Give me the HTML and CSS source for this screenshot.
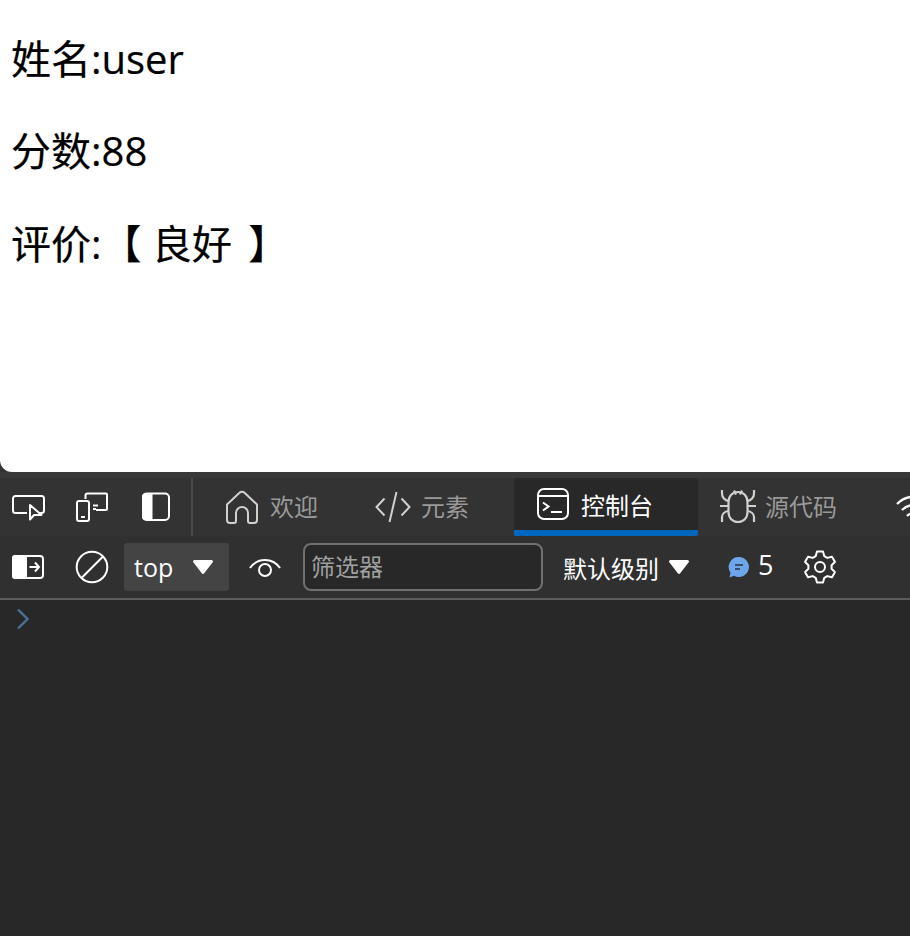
FILE: index.html
```html
<!DOCTYPE html>
<html lang="zh-CN">
<head>
<meta charset="utf-8">
<title>评价</title>
<link rel="stylesheet" href="styles.css">
</head>
<body>
<main class="page">
  <p class="line">姓名:user</p>
  <p class="line">分数:88</p>
  <p class="line line-last">评价:【 良好 <span class="close">】</span></p>
</main>
<section class="devtools">
  <div class="tabbar">
    <div class="tools">
      <svg width="34" height="34" viewBox="-1 0 34 34" fill="none" stroke="#fff" stroke-width="2"><path d="M15 23H3.500a2.500 2.500 0 0 1-2.500-2.500V8.500A2.500 2.500 0 0 1 3.500 6h26A2.500 2.500 0 0 1 32 8.500v12a2.500 2.500 0 0 1-2.500 2.500H27"/><path d="M18 15v14.500l4-4.500h7.500z" stroke-linejoin="round"/></svg>
      <svg width="34" height="34" viewBox="1 0 34 34" fill="none" stroke="#fff" stroke-width="2"><path d="M10.500 9V5.500a2 2 0 0 1 2-2H31a1 1 0 0 1 1 1V19a1 1 0 0 1-1 1H21"/><rect x="2" y="11" width="12" height="20" rx="2"/><path d="M6 27h4M18 15.500h5M18 19h3"/></svg>
      <svg width="34" height="34" viewBox="2 0 34 34" fill="none"><rect x="4" y="3.500" width="26" height="26.500" rx="4" stroke="#fff" stroke-width="2"/><path d="M7 3h6.500v27.500H7a4 4 0 0 1-4-4V7a4 4 0 0 1 4-4z" fill="#fff"/></svg>
    </div>
    <span class="divider"></span>
    <div class="tab tab-home">
      <svg width="34" height="36" viewBox="0 0 34 36" fill="none" stroke="#d0d0d0" stroke-width="2"><path d="M2 15.500 14.500 3.800a3.500 3.500 0 0 1 5 0L32 15.500V31a3 3 0 0 1-3 3h-4a2 2 0 0 1-2-2v-8a6 6 0 0 0-12 0v8a2 2 0 0 1-2 2H5a3 3 0 0 1-3-3z" stroke-linejoin="round"/></svg>
      <span>欢迎</span>
    </div>
    <div class="tab tab-elements">
      <svg width="36" height="32" viewBox="0 0 36 32" fill="none" stroke="#d0d0d0" stroke-width="2"><path d="M9.500 7.500 1.500 16l8 8.500M26.500 7.500l8 8.500-8 8.500M21.500 1l-7 30"/></svg>
      <span>元素</span>
    </div>
    <div class="tab tab-active">
      <svg width="32" height="32" viewBox="0 0 32 32" fill="none" stroke="#fff" stroke-width="2"><rect x="1" y="1" width="30" height="30" rx="6"/><path d="M1 8h30M6 14.500l5.500 4-5.500 4M14 24h11"/></svg>
      <span>控制台</span>
    </div>
    <div class="tab tab-sources">
      <svg width="36" height="36" viewBox="0 0 36 36" fill="none" stroke="#d0d0d0" stroke-width="2.200"><path d="M8.500 13c0-6 4-10 9.500-10s9.500 4 9.500 10v10c0 6-4 10-9.500 10s-9.500-4-9.500-10z"/><path d="M14 1.500l2 4M22 1.500l-2 4M2 1v4c0 3 3 6.500 6.500 7M34 1v4c0 3-3 6.500-6.500 7M0 17h8.500M36 17h-8.500M2 33v-5c0-3 3-5.500 6.500-6M34 33v-5c0-3-3-5.500-6.500-6"/></svg>
      <span>源代码</span>
    </div>
    <svg class="wifi" width="40" height="30" viewBox="0 0 40 30" fill="none" stroke="#fff" stroke-width="2.400"><path d="M1 12c10-10 28-10 38 0M6 18c7-7 21-7 28 0M11 24c4-4 14-4 18 0"/></svg>
  </div>
  <div class="toolbar">
    <svg class="toggle" width="34" height="34" viewBox="0 0 34 34" fill="none"><rect x="2" y="6" width="30" height="22" rx="3" stroke="#fff" stroke-width="2"/><path d="M4 5h12v24H4a3 3 0 0 1-3-3V8a3 3 0 0 1 3-3z" fill="#fff"/><path d="M18.500 17h9M24 12.500l4 4.500-4 4.500" stroke="#fff" stroke-width="2"/></svg>
    <svg class="clear" width="34" height="34" viewBox="0 0 34 34" fill="none" stroke="#fff" stroke-width="2"><circle cx="17" cy="17" r="15.300"/><path d="M6.500 28 28 6.500"/></svg>
    <div class="ctx"><span>top</span><svg width="22" height="16" viewBox="0 0 22 16"><path d="M2.500 1h17a1.500 1.500 0 0 1 1.200 2.300l-8.500 11a1.500 1.500 0 0 1-2.400 0l-8.500-11A1.500 1.500 0 0 1 2.500 1z" fill="#fff"/></svg></div>
    <svg class="eye" width="34" height="24" viewBox="0 0 34 24" fill="none" stroke="#fff" stroke-width="2"><path d="M2 13c3.500-5 9-8 15-8s11.500 3 15 8"/><circle cx="17" cy="15" r="6"/></svg>
    <div class="filter">筛选器</div>
    <div class="level"><span>默认级别</span><svg width="22" height="16" viewBox="0 0 22 16"><path d="M2.500 1h17a1.500 1.500 0 0 1 1.200 2.300l-8.500 11a1.500 1.500 0 0 1-2.400 0l-8.500-11A1.500 1.500 0 0 1 2.500 1z" fill="#fff"/></svg></div>
    <div class="issues">
      <svg width="22" height="22" viewBox="0 0 22 22"><path d="M11 1a10 10 0 1 1-5 18.700L1.500 21.500l1-4.800A10 10 0 0 1 11 1z" fill="#6ea6ea"/><path d="M7 9h8M7 13h5" stroke="#28323d" stroke-width="1.500"/></svg>
      <span>5</span>
    </div>
    <svg class="gear" width="34" height="36" viewBox="0 0 34 36" fill="none" stroke="#fff" stroke-width="2" stroke-linejoin="round"><path d="M14 2.500h6l1.300 4.700 3 1.700 4.700-1.200 3 5.200-3.400 3.400v3.400l3.400 3.400-3 5.200-4.700-1.200-3 1.700-1.300 4.700h-6l-1.300-4.700-3-1.700-4.700 1.200-3-5.200 3.400-3.400v-3.400l-3.400-3.400 3-5.200 4.700 1.200 3-1.700z"/><circle cx="17" cy="18" r="5"/></svg>
  </div>
  <div class="console">
    <svg width="14" height="22" viewBox="0 0 14 22" fill="none" stroke="#4a7199" stroke-width="2.400"><path d="M2 .5 11.500 10 2 19.500"/></svg>
  </div>
</section>
</body>
</html>
```
FILE: styles.css
```css
* { box-sizing: border-box; }
html, body { margin: 0; height: 100%; overflow: hidden; background: #333; }
body {
  width: 910px;
  height: 936px;
  display: flex;
  flex-direction: column;
  font-family: "Open Sans", "Noto Sans CJK SC", sans-serif;
}
.page {
  height: 472px;
  flex: none;
  background: #fff;
  border-bottom-left-radius: 12px;
  padding: 1px 11px 0;
  color: #000;
}
.line { margin: 0; height: 92px; font-size: 40px; line-height: 54px; padding-top: 31px; white-space: pre; -webkit-text-stroke: 0.2px #000; }
.line-last { padding-top: 32px; }
.close { margin-left: 6px; }
.devtools { flex: 1; display: flex; flex-direction: column; background: #333; border-top: 6px solid #393939; min-height: 0; }
.tabbar { height: 58px; display: flex; align-items: center; flex: none; overflow: hidden; }
.tabbar svg, .toolbar svg { flex: none; }
.tools { display: flex; flex: none; width: 191px; padding-left: 11px; gap: 31px; }
.divider { width: 2px; height: 58px; flex: none; background: #4a4a4a; }
.tab { display: flex; flex: none; align-items: center; gap: 10px; color: #999; font-size: 24px; height: 58px; white-space: nowrap; }
.tab span { margin-top: -4px; }
.tab-home { margin-left: 32px; gap: 11px; }
.tab-elements { margin-left: 57px; }
.tab-active {
  margin-left: 45px; width: 184px; padding-left: 23px; gap: 12px;
  color: #fff; background: #282828; border-radius: 4px 4px 2px 2px;
  border-bottom: 6px solid #0067c0;
}
.tab-active span { margin-top: 0; }
.tab-sources { margin-left: 22px; gap: 9px; }
.wifi { margin-left: 59px; }
.toolbar { height: 62px; display: flex; align-items: center; flex: none; background: #303030; }
.toggle { margin-left: 11px; }
.clear { margin-left: 30px; }
.ctx {
  margin-left: 15px; width: 105px; height: 48px; background: #444; border-radius: 3px;
  color: #fff; font-size: 25px; display: flex; align-items: center; padding-left: 10px; gap: 19px;
}
.eye { margin-left: 19px; }
.filter {
  margin-left: 21px; width: 240px; height: 48px; border: 2px solid #707070; border-radius: 8px;
  background: #282828; color: #a0a0a0; font-size: 24px; line-height: 44px; padding-left: 6px;
}
.level { margin-left: 20px; display: flex; align-items: center; gap: 9px; color: #fff; font-size: 24px; white-space: nowrap; }
.issues { margin-left: 38px; display: flex; align-items: center; gap: 8px; color: #fff; font-size: 27px; }
.issues span { margin-top: -5px; line-height: 34px; }
.gear { margin-left: 30px; }
.console { flex: 1; border-top: 2px solid #5c5c5c; background: #282828; padding: 9px 0 0 16px; }
.console svg { display: block; }
```
